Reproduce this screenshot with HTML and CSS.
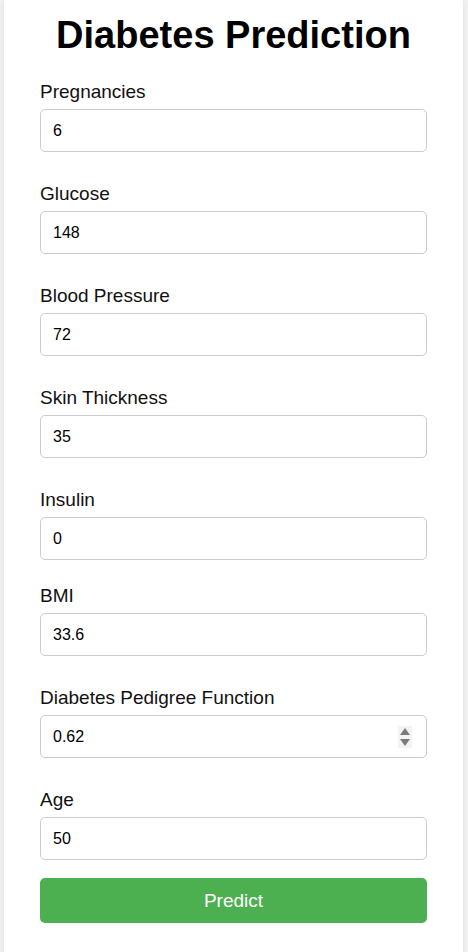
FILE: index.html
```html
<!DOCTYPE html>
<html lang="en">
<head>
<meta charset="utf-8">
<title>Diabetes Prediction</title>
<link rel="stylesheet" href="styles.css">
</head>
<body>
<div class="container">
  <h1 class="title">Diabetes Prediction</h1>
  <form class="form">
    <div class="field">
      <label class="label" for="preg">Pregnancies</label>
      <input class="input" id="preg" type="text" value="6">
    </div>
    <div class="field">
      <label class="label" for="glu">Glucose</label>
      <input class="input" id="glu" type="text" value="148">
    </div>
    <div class="field">
      <label class="label" for="bp">Blood Pressure</label>
      <input class="input" id="bp" type="text" value="72">
    </div>
    <div class="field">
      <label class="label" for="skin">Skin Thickness</label>
      <input class="input" id="skin" type="text" value="35">
    </div>
    <div class="field field-tight">
      <label class="label" for="ins">Insulin</label>
      <input class="input" id="ins" type="text" value="0">
    </div>
    <div class="field">
      <label class="label" for="bmi">BMI</label>
      <input class="input" id="bmi" type="text" value="33.6">
    </div>
    <div class="field">
      <label class="label" for="dpf">Diabetes Pedigree Function</label>
      <div class="input-wrap">
        <input class="input" id="dpf" type="text" value="0.62">
        <span class="spinner" aria-hidden="true">
          <svg width="12" height="20" viewBox="0 0 12 20">
            <path d="M6 1 L11 8 L1 8 Z" fill="#7a7a7a"/>
            <path d="M1 12 L11 12 L6 19 Z" fill="#7a7a7a"/>
          </svg>
        </span>
      </div>
    </div>
    <div class="field field-last">
      <label class="label" for="age">Age</label>
      <input class="input" id="age" type="text" value="50">
    </div>
    <button class="button" type="button">Predict</button>
  </form>
</div>
</body>
</html>
```
FILE: styles.css
```css
* {
  box-sizing: border-box;
}

html, body {
  margin: 0;
  padding: 0;
}

body {
  background: #f4f4f4;
  font-family: "Liberation Sans", Arial, sans-serif;
  color: #222;
}

.container {
  width: 459px;
  margin: 0 0 0 4px;
  background: #ffffff;
  border-radius: 0 0 8px 8px;
  box-shadow: 0 0 10px rgba(0, 0, 0, 0.1);
  padding: 13px 36px 40px;
}

.title {
  margin: 0 0 24px;
  font-size: 38px;
  line-height: 44px;
  font-weight: bold;
  color: #000;
  text-align: center;
}

.form {
  display: flex;
  flex-direction: column;
}

.field {
  display: flex;
  flex-direction: column;
  margin-bottom: 31px;
}

.field-tight {
  margin-bottom: 25px;
}

.field-last {
  margin-bottom: 18px;
}

.label {
  font-size: 19px;
  line-height: 22px;
  color: #111;
  margin-bottom: 6px;
}

.input-wrap {
  position: relative;
}

.input {
  display: block;
  width: 100%;
  height: 43px;
  padding: 0 12px;
  border: 1px solid #cccccc;
  border-radius: 5px;
  font-family: "Liberation Sans", Arial, sans-serif;
  font-size: 16px;
  color: #000;
  background: #fff;
  outline: none;
}

.spinner {
  position: absolute;
  right: 15px;
  top: 11px;
  width: 14px;
  height: 22px;
  background: #f3f3f3;
  display: flex;
  align-items: center;
  justify-content: center;
}

.button {
  width: 100%;
  height: 45px;
  border: none;
  border-radius: 5px;
  background: #4caf50;
  color: #fff;
  font-family: "Liberation Sans", Arial, sans-serif;
  font-size: 19px;
  cursor: pointer;
}
```
